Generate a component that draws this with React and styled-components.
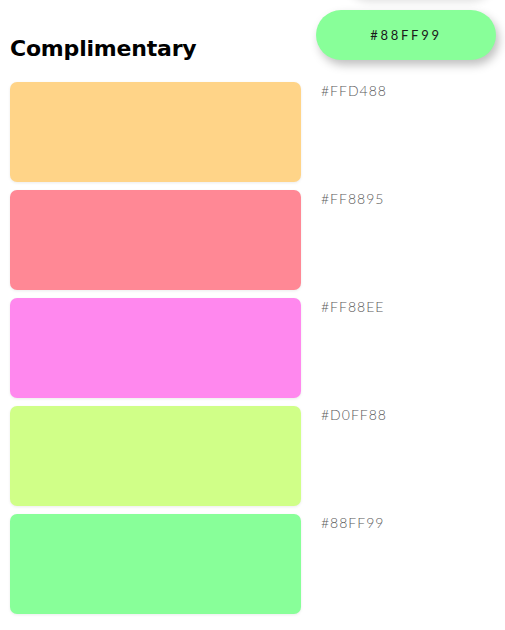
import React from "react";
import styled, { createGlobalStyle } from "styled-components";

const GlobalStyle = createGlobalStyle`
  body {
    margin: 0;
    background: #fff;
    font-family: "Lato", "Open Sans", sans-serif;
  }
`;

const colors = ["#FFD488", "#FF8895", "#FF88EE", "#D0FF88", "#88FF99"];

const Page = styled.div`
  position: relative;
  padding: 10px 9px 0 10px;
  overflow: hidden;
  height: 620px;
`;

const TopShadow = styled.div`
  position: absolute;
  top: -50px;
  right: 10px;
  width: 150px;
  height: 50px;
  border-radius: 25px;
  box-shadow: 0 2px 8px rgba(0, 0, 0, 0.12);
`;

const Header = styled.div`
  display: flex;
  justify-content: space-between;
  align-items: flex-start;
`;

const Title = styled.h2`
  margin: 25px 0 0;
  font-family: "DejaVu Sans", sans-serif;
  font-weight: 700;
  font-size: 22px;
  line-height: 27px;
  letter-spacing: -0.2px;
  color: #000;
`;

const Pill = styled.button`
  width: 180px;
  height: 50px;
  border: none;
  border-radius: 25px;
  background: #88ff99;
  box-shadow: 3px 5px 10px rgba(0, 0, 0, 0.25);
  font-family: "Lato", sans-serif;
  font-size: 13px;
  letter-spacing: 2.7px;
  color: #1a1a1a;
  cursor: pointer;
`;

const List = styled.div`
  display: flex;
  flex-direction: column;
  gap: 8px;
  margin-top: 20px;
`;

const Row = styled.div`
  display: grid;
  grid-template-columns: 291px 1fr;
  column-gap: 20px;
  align-items: start;
`;

const Swatch = styled.div`
  height: 100px;
  border-radius: 7px;
  background: ${(p) => p.$color};
  box-shadow: 0 1px 3px rgba(0, 0, 0, 0.08);
`;

const Label = styled.span`
  font-family: "Lato", sans-serif;
  font-weight: 300;
  font-size: 14px;
  line-height: 18px;
  letter-spacing: 1px;
  color: #5a5a5a;
`;

export default function App() {
  return (
    <>
      <GlobalStyle />
      <Page>
        <TopShadow />
        <Header>
          <Title>Complimentary</Title>
          <Pill>#88FF99</Pill>
        </Header>
        <List>
          {colors.map((c) => (
            <Row key={c}>
              <Swatch $color={c} />
              <Label>{c}</Label>
            </Row>
          ))}
        </List>
      </Page>
    </>
  );
}
